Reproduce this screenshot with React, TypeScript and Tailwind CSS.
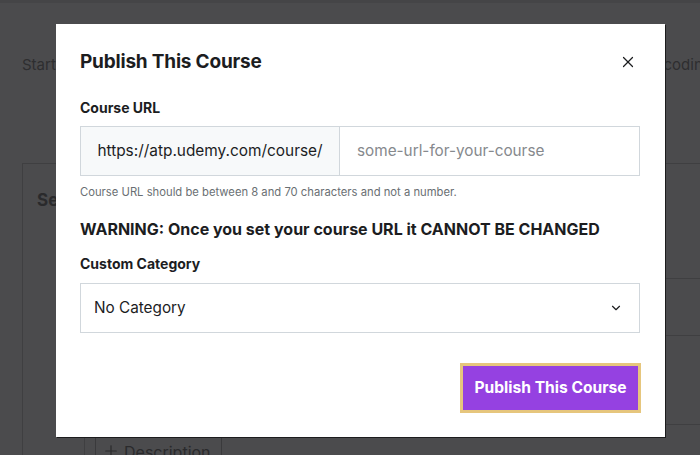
import { X, ChevronDown, Plus } from 'lucide-react';

const font = { fontFamily: 'Inter, "Noto Sans", sans-serif' };

const PublishModal = () => {
  return (
    <div className="absolute left-[56px] top-[24px] w-[609px] h-[413px] bg-white px-6 pt-[24px] shadow-[1px_1px_0_#1c1c1d]">
      {/* Header */}
      <div className="flex items-center justify-between">
        <h2 className="text-[19px] leading-7 font-bold text-[#1c1d1f] tracking-[-0.2px]">Publish This Course</h2>
        <button className="mr-[4px] text-[#1c1d1f]">
          <X size={18} strokeWidth={1.6} />
        </button>
      </div>

      {/* Course URL */}
      <label className="mt-[22px] block text-[14px] leading-5 font-bold text-[#1c1d1f]">Course URL</label>
      <div className="mt-[8px] flex h-[50px] w-[560px] border border-[#d1d7dc]">
        <div className="flex w-[259px] shrink-0 items-center justify-center border-r border-[#d1d7dc] bg-[#f7f9fa] text-[15.4px] text-[#1c1d1f]">
          https://atp.udemy.com/course/
        </div>
        <div className="flex flex-1 items-center pl-[17px] text-[15.3px] text-[#86898d]">some-url-for-your-course</div>
      </div>
      <p className="mt-[8px] text-[11.25px] leading-4 text-[#6a6f73]">
        Course URL should be between 8 and 70 characters and not a number.
      </p>

      <p className="mt-[17px] text-[16px] leading-6 font-bold text-[#1c1d1f]">
        WARNING: Once you set your course URL it CANNOT BE CHANGED
      </p>

      {/* Category */}
      <label className="mt-[13px] block text-[14px] leading-5 font-bold text-[#1c1d1f]">Custom Category</label>
      <div className="mt-[9px] flex h-[50px] w-[560px] items-center justify-between border border-[#d1d7dc] pl-[13px] pr-[16px] text-[15.3px] text-[#1c1d1f]">
        <span>No Category</span>
        <ChevronDown size={14} strokeWidth={2} />
      </div>

      {/* Footer */}
      <div className="mt-[30px] flex justify-end">
        <button className="flex h-[50px] w-[181px] items-center justify-center border-[3px] border-[#e6c67d] bg-[#9541e1] text-[15.6px] font-bold text-white">
          Publish This Course
        </button>
      </div>
    </div>
  );
};

const App = () => {
  return (
    <div className="relative h-[455px] w-[700px] overflow-hidden bg-[#4b4b4d]" style={font}>
      {/* Background page */}
      <div className="h-[3px] bg-[#454547]" />
      <div className="flex justify-between px-[22px] pt-[51px] text-[15px] text-[#2e2e30]">
        <span>Start</span>
        <span className="mr-[-34px]">coding</span>
      </div>
      <div className="mt-[86px] ml-[22px] h-[300px] border-l border-t border-[#3f3f41]">
        <div className="pl-[14px] pt-[24px] text-[17px] font-bold text-[#2a2a2c]">Section</div>
      </div>
      <div className="absolute left-[665px] right-0 top-[278px] border-t border-[#3f3f41]" />
      <div className="absolute left-[665px] right-0 top-[335px] border-t border-[#3f3f41]" />
      <div className="absolute left-[665px] right-0 top-[424px] border-t border-[#3f3f41]" />
      <div className="absolute left-[84px] top-[425px] h-[30px] border-l border-[#3f3f41]" />
      <div className="absolute left-[95px] top-[437px] flex h-[30px] w-[127px] items-start gap-1 border border-[#3a3a3c] pl-[6px] pt-[2px] text-[16px] text-[#2a2a2c]">
        <Plus size={18} strokeWidth={1.6} className="mt-[2px]" />
        <span>Description</span>
      </div>

      <PublishModal />
    </div>
  );
};

export default App;
